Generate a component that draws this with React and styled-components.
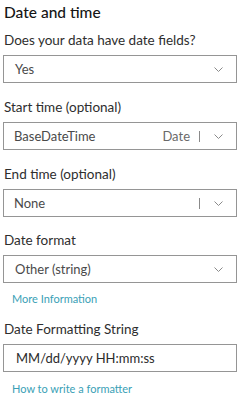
import React from "react";
import styled, { createGlobalStyle } from "styled-components";

const Global = createGlobalStyle`
  html, body { margin: 0; padding: 0; background: #fff; }
  body { font-family: "Lato", "Noto Sans", sans-serif; color: #323232; }
`;

const Panel = styled.div`
  width: 237px;
  padding: 3px 0 0 3px;
  box-sizing: border-box;
  display: flex;
  flex-direction: column;
`;

const Heading = styled.h2`
  margin: 0 0 0 1px;
  font-size: 15.5px;
  line-height: 19px;
  font-weight: 500;
  color: #151515;
`;

const Field = styled.div`
  display: flex;
  flex-direction: column;
  margin-top: ${(p) => p.$top}px;
`;

const Label = styled.div`
  font-size: 13.5px;
  line-height: 18px;
  color: #2e2e2e;
  margin-left: 1px;
  margin-bottom: 6px;
`;

const Box = styled.div`
  height: 28px;
  box-sizing: border-box;
  border: 1px solid #959595;
  display: flex;
  align-items: center;
  padding: 0 13px 0 ${(p) => p.$padLeft || 11}px;
  font-size: 13px;
`;

const Value = styled.span`
  flex: 1;
  white-space: nowrap;
  color: ${(p) => (p.$dark ? "#2b2b2b" : "#4a4a4a")};
`;

const Type = styled.span`
  color: #6a6a6a;
  margin-right: 9px;
`;

const Divider = styled.span`
  width: 1px;
  height: 11px;
  background: #8a8a8a;
  margin-right: 14px;
`;

const Link = styled.a`
  font-size: 11px;
  line-height: 14px;
  color: #3a9fb6;
  margin: ${(p) => p.$top}px 0 0 9px;
  text-decoration: none;
`;

const Chevron = () => (
  <svg width="9" height="5" viewBox="0 0 9 5" fill="none">
    <path d="M0.5 0.5l4 4 4-4" stroke="#8a8a8a" strokeWidth="1" />
  </svg>
);

const Select = ({ value, type, divider, padLeft }) => (
  <Box $padLeft={padLeft}>
    <Value>{value}</Value>
    {type && <Type>{type}</Type>}
    {divider && <Divider />}
    <Chevron />
  </Box>
);

export default function App() {
  return (
    <>
      <Global />
      <Panel>
        <Heading>Date and time</Heading>
        <Field $top={9}>
          <Label>Does your data have date fields?</Label>
          <Select value="Yes" padLeft={11} />
        </Field>
        <Field $top={15}>
          <Label>Start time (optional)</Label>
          <Select value="BaseDateTime" type="Date" divider padLeft={10} />
        </Field>
        <Field $top={15}>
          <Label>End time (optional)</Label>
          <Select value="None" divider padLeft={10} />
        </Field>
        <Field $top={14}>
          <Label>Date format</Label>
          <Select value="Other (string)" padLeft={11} />
          <Link href="#" $top={9}>More Information</Link>
        </Field>
        <Field $top={14}>
          <Label>Date Formatting String</Label>
          <Box $padLeft={12}>
            <Value $dark>MM/dd/yyyy HH:mm:ss</Value>
          </Box>
          <Link href="#" $top={10}>How to write a formatter</Link>
        </Field>
      </Panel>
    </>
  );
}
